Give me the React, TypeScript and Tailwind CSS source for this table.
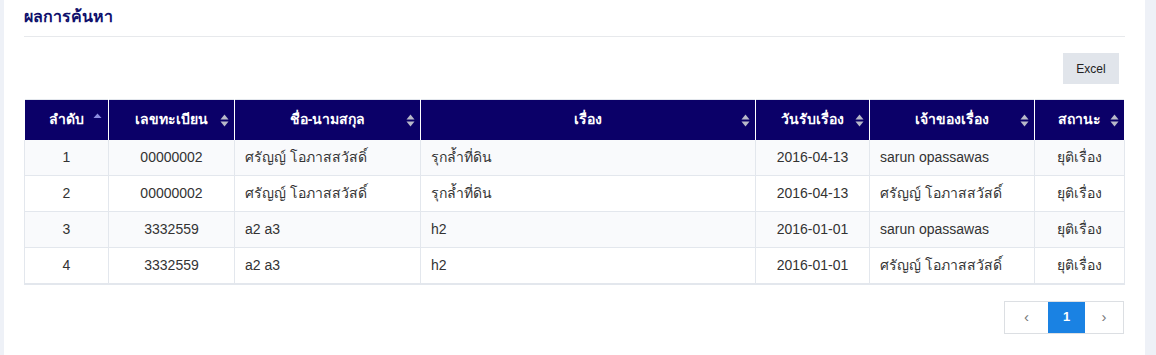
import React from "react";

const headers = [
  { label: "ลำดับ", w: 84, sort: "asc" },
  { label: "เลขทะเบียน", w: 126, sort: "both" },
  { label: "ชื่อ-นามสกุล", w: 186, sort: "both" },
  { label: "เรื่อง", w: 335, sort: "both" },
  { label: "วันรับเรื่อง", w: 114, sort: "both" },
  { label: "เจ้าของเรื่อง", w: 165, sort: "both" },
  { label: "สถานะ", w: 90, sort: "both" },
];

const rows = [
  ["1", "00000002", "ศรัญญ์ โอภาสสวัสดิ์", "รุกล้ำที่ดิน", "2016-04-13", "sarun opassawas", "ยุติเรื่อง"],
  ["2", "00000002", "ศรัญญ์ โอภาสสวัสดิ์", "รุกล้ำที่ดิน", "2016-04-13", "ศรัญญ์ โอภาสสวัสดิ์", "ยุติเรื่อง"],
  ["3", "3332559", "a2 a3", "h2", "2016-01-01", "sarun opassawas", "ยุติเรื่อง"],
  ["4", "3332559", "a2 a3", "h2", "2016-01-01", "ศรัญญ์ โอภาสสวัสดิ์", "ยุติเรื่อง"],
];

const align = ["center", "center", "left", "left", "center", "left", "center"];

function SortIcon({ kind }: { kind: string }) {
  if (kind === "asc") {
    return (
      <svg width="9" height="12" viewBox="0 0 9 12" className="absolute right-[6px] top-[13px]">
        <path d="M0.5 5 L4.5 0.5 L8.5 5 Z" fill="#8c8ce0" />
      </svg>
    );
  }
  return (
    <svg width="9" height="13" viewBox="0 0 9 13" className="absolute right-[5px] top-[14px]">
      <path d="M0.5 5.5 L4.5 0.5 L8.5 5.5 Z" fill="#b9b9c9" />
      <path d="M0.5 7.5 L4.5 12.5 L8.5 7.5 Z" fill="#b9b9c9" />
    </svg>
  );
}

export default function App() {
  const font = { fontFamily: '"Liberation Sans", "Noto Sans", Tahoma, sans-serif' };
  return (
    <div className="flex min-h-[355px] bg-[#eef1f7] pl-[4px] pr-[12px]" style={font}>
      <div className="flex-1 bg-white px-[20px] pt-[6px]">
        <div className="h-[31px] border-b border-[#e7e9ec] text-[16px] font-bold leading-[22px] text-[#10106c]">
          ผลการค้นหา
        </div>
        <div className="flex justify-end pb-[15px] pr-[6px] pt-[16px]">
          <button className="h-[31px] w-[56px] bg-[#e1e5eb] text-[12px] text-[#222]">Excel</button>
        </div>
        <table className="w-[1100px] table-fixed border-collapse border-t border-[#e3e7ed] text-[14px] text-[#333]">
          <colgroup>
            {headers.map((h, i) => (
              <col key={i} style={{ width: h.w }} />
            ))}
          </colgroup>
          <thead>
            <tr className="h-[40px] bg-[#0b0068]">
              {headers.map((h, i) => (
                <th
                  key={i}
                  className="relative border-x border-white px-[8px] text-center text-[14px] font-bold text-white"
                >
                  {h.label}
                  <SortIcon kind={h.sort} />
                </th>
              ))}
            </tr>
          </thead>
          <tbody>
            {rows.map((r, ri) => (
              <tr
                key={ri}
                className={`h-[36px] ${ri % 2 === 0 ? "bg-[#f9fafc]" : "bg-white"} ${ri === rows.length - 1 ? "border-b-2" : "border-b"} border-[#e3e7ed]`}
              >
                {r.map((c, ci) => (
                  <td
                    key={ci}
                    className={`border-x border-[#e3e7ed] px-[10px] ${align[ci] === "center" ? "text-center" : "text-left"}`}
                  >
                    {c}
                  </td>
                ))}
              </tr>
            ))}
          </tbody>
        </table>
        <div className="flex justify-end pr-[1px] pt-[16px]">
          <div className="flex h-[33px] border border-[#dcdfe3]">
            <div className="flex w-[43px] items-center justify-center text-[15px] text-[#777]">‹</div>
            <div className="flex w-[37px] items-center justify-center bg-[#1a82e3] text-[13px] font-bold text-white">1</div>
            <div className="flex w-[38px] items-center justify-center text-[15px] text-[#777]">›</div>
          </div>
        </div>
      </div>
    </div>
  );
}
